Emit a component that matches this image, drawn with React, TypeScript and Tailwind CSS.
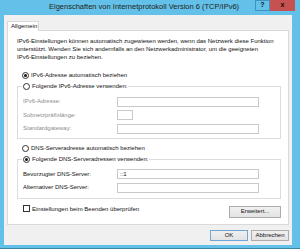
import React from "react"

function Radio({ checked, label }: { checked?: boolean; label: string }) {
  return (
    <div className="flex items-center h-[9px]">
      <span className="w-[7px] h-[7px] rounded-full border border-[#333] bg-white flex items-center justify-center shrink-0">
        {checked && <span className="w-[3px] h-[3px] rounded-full bg-[#111]" />}
      </span>
      <span className="ml-[2px] text-[6px] leading-[9px] text-[#111] whitespace-nowrap">{label}</span>
    </div>
  )
}

function Field({ label, value, disabled, small }: { label: string; value?: string; disabled?: boolean; small?: boolean }) {
  return (
    <div className="flex items-center h-[10px]">
      <span className={`w-[94px] text-[6px] leading-[9px] whitespace-nowrap ${disabled ? "text-[#8d8d8d]" : "text-[#111]"}`}>
        {label}
      </span>
      <div
        className={`h-[10px] border border-[#c9c9c9] bg-white text-[6px] leading-[8px] pl-[2px] text-[#111] ${small ? "w-[16px]" : "w-[142px]"}`}
      >
        {value}
      </div>
    </div>
  )
}

function WinButton({ label, primary, className }: { label: string; primary?: boolean; className?: string }) {
  return (
    <div
      className={`h-[11px] flex items-center justify-center text-[6px] text-[#111] bg-gradient-to-b from-[#f0f0f0] to-[#e3e3e3] border ${primary ? "border-[#6fa6d6]" : "border-[#acacac]"} ${className ?? ""}`}
    >
      {label}
    </div>
  )
}

export default function App() {
  return (
    <div
      className="w-[300px] h-[249px] bg-[#63c1e9] flex flex-col overflow-hidden border-b border-[#3a86a8]"
      style={{ fontFamily: '"Liberation Sans", Arial, sans-serif' }}
    >
      {/* title bar */}
      <div className="h-[15px] flex items-start shrink-0">
        <div className="flex-1 pl-[49px] pt-[2px] text-[7.5px] leading-[10px] text-[#222] whitespace-nowrap">
          Eigenschaften von Internetprotokoll Version 6 (TCP/IPv6)
        </div>
        <div className="w-[15px] h-[11px] flex items-center justify-center text-[7px] font-bold text-[#111] border border-[#3e94bd]">
          ?
        </div>
        <div className="w-[25px] h-[11px] mr-[5px] bg-[#c75050] flex items-center justify-center text-[7px] font-bold text-[#111]">
          x
        </div>
      </div>

      {/* body */}
      <div className="flex-1 ml-[4px] mr-[8px] mb-[3px] bg-[#f0f0f0] px-[3px] pt-[6px] flex flex-col">
        <div className="flex">
          <div className="h-[10px] w-[32px] bg-white border border-b-0 border-[#d9d9d9] flex items-center pl-[3px] text-[6px] text-[#111] -mb-px relative">
            Allgemein
          </div>
        </div>
        <div className="h-[195px] border border-[#d9d9d9] bg-white pl-[9px] pr-[7px] flex flex-col">
          <p className="mt-[6px] text-[6px] leading-[8px] text-[#111]">
            IPv6-Einstellungen können automatisch zugewiesen werden, wenn das Netzwerk diese Funktion
            <br />
            unterstützt. Wenden Sie sich andernfalls an den Netzwerkadministrator, um die geeigneten
            <br />
            IPv6-Einstellungen zu beziehen.
          </p>

          <div className="mt-[10px] pl-[5px]">
            <Radio checked label="IPv6-Adresse automatisch beziehen" />
          </div>

          <fieldset className="mt-[2px] border border-[#dcdcdc] px-[5px] pb-[4px] flex flex-col gap-[3.5px]">
            <legend className="px-[1px] ml-[-1px]">
              <Radio label="Folgende IPv6-Adresse verwenden:" />
            </legend>
            <div className="mt-[2px]" />
            <Field label="IPv6-Adresse:" disabled />
            <Field label="Subnetzpräfixlänge:" disabled small />
            <Field label="Standardgateway:" disabled />
          </fieldset>

          <div className="mt-[5px] pl-[5px]">
            <Radio label="DNS-Serveradresse automatisch beziehen" />
          </div>

          <fieldset className="mt-[2px] border border-[#dcdcdc] px-[5px] pb-[5px] flex flex-col gap-[3.5px]">
            <legend className="px-[1px] ml-[-1px]">
              <Radio checked label="Folgende DNS-Serveradressen verwenden:" />
            </legend>
            <div className="mt-[2px]" />
            <Field label="Bevorzugter DNS-Server:" value="::1" />
            <Field label="Alternativer DNS-Server:" />
          </fieldset>

          <div className="mt-[6px] flex items-start justify-between">
            <div className="flex items-center h-[8px] pl-[6px]">
              <span className="w-[7px] h-[7px] border border-[#333] bg-white shrink-0" />
              <span className="ml-[2px] text-[6px] leading-[8px] text-[#111] whitespace-nowrap">
                Einstellungen beim Beenden überprüfen
              </span>
            </div>
            <WinButton label="Erweitert..." className="w-[52px] h-[12px] mt-[1px]" />
          </div>
        </div>

        <div className="mt-[5px] flex justify-end gap-[3px]">
          <WinButton label="OK" primary className="w-[38px]" />
          <WinButton label="Abbrechen" className="w-[38px]" />
        </div>
      </div>
    </div>
  )
}
